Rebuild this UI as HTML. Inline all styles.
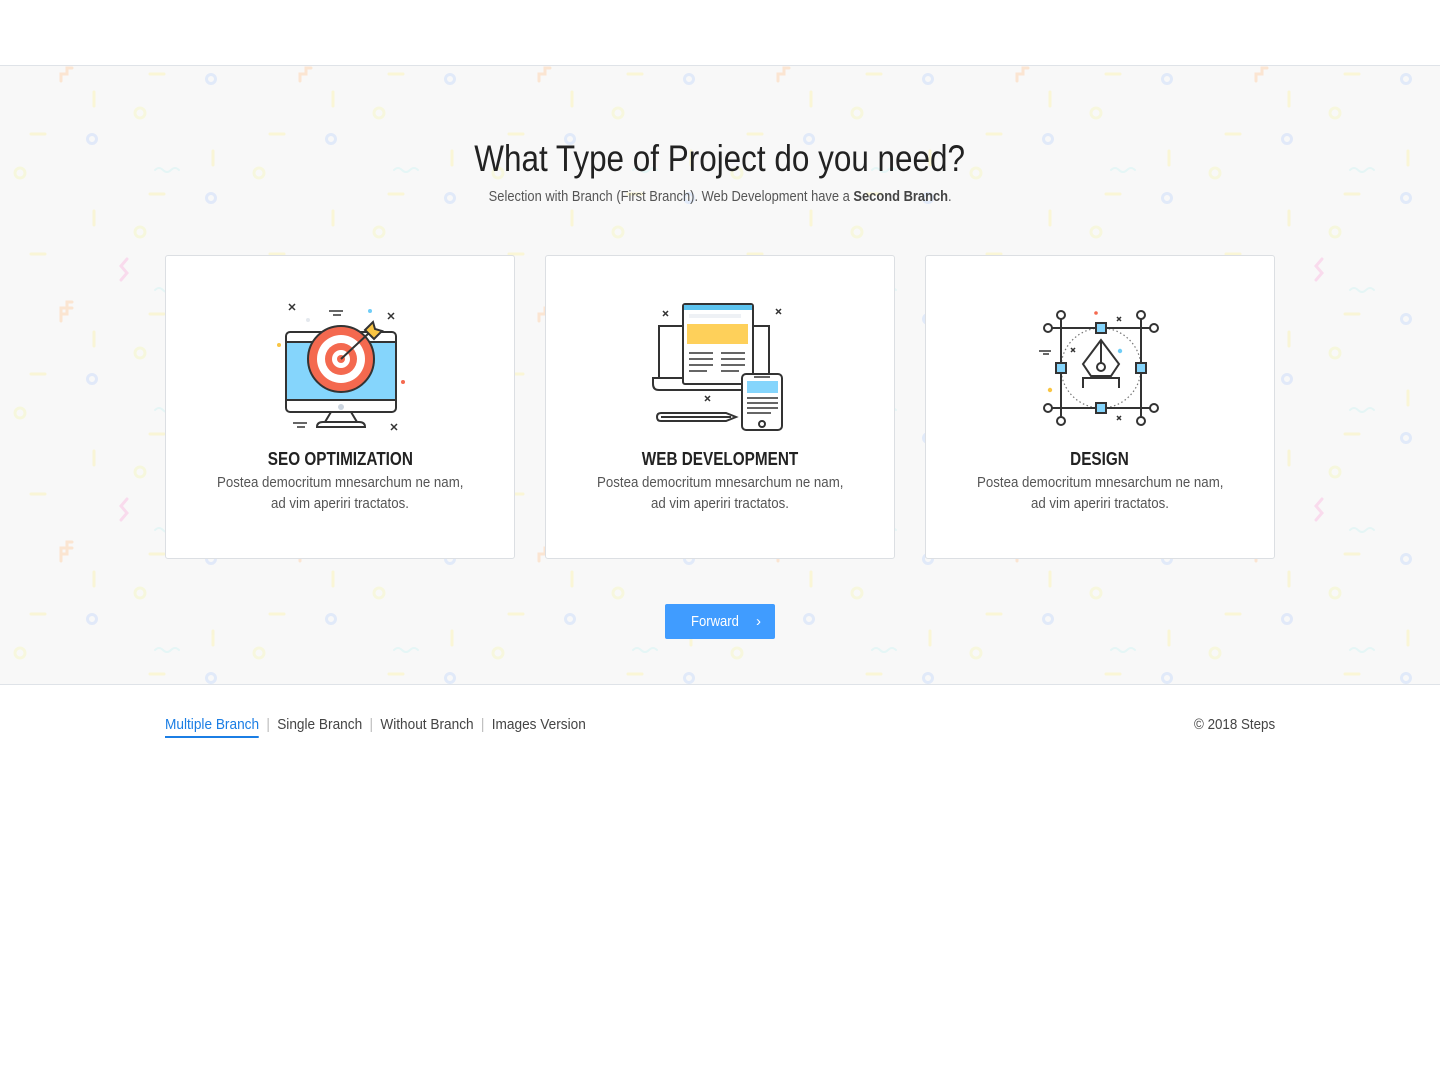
<!DOCTYPE html>
<html><head><meta charset="utf-8">
<style>
*{box-sizing:border-box;margin:0;padding:0}
body{width:1440px;height:1080px;background:#fff;font-family:"Liberation Sans",sans-serif;color:#333;overflow:hidden;position:relative}
.band{position:absolute;left:0;top:65px;width:1440px;height:620px;background:#f8f8f8;border-top:1px solid #dfe3e8;border-bottom:1px solid #dfe3e8;overflow:hidden}
.band svg.bg{position:absolute;left:0;top:0}
.c{position:absolute;left:0;width:1440px;text-align:center}
.c span{display:inline-block;transform-origin:center}
h1{font-weight:400;font-size:37px;color:#222}
h1 span{transform:scaleX(0.85)}
.sub{top:188px;font-size:15px;color:#555}
.sub span{transform:scaleX(0.86)}
.sub b{color:#444}
.card{position:absolute;top:255px;width:350px;height:304px;background:#fff;border:1px solid #dcdfe3;border-radius:3px;text-align:center}
.card svg{position:absolute;left:95px;top:40px}
.card h3{position:absolute;top:193px;width:100%;font-size:18px;font-weight:700;color:#222}
.card h3 span{display:inline-block;transform:scaleX(0.85)}
.card p{position:absolute;top:216px;width:100%;font-size:15px;line-height:21px;color:#555}
.card p span{display:inline-block;transform:scaleX(0.885)}
.btn{position:absolute;left:665px;top:604px;width:110px;height:35px;background:#409cff;border-radius:2px;color:#fff;font-size:15px;line-height:35px}
.btn b{font-weight:400;position:absolute;left:26px;top:0;display:inline-block;transform:scaleX(0.87);transform-origin:left}
.btn span{position:absolute;right:14px;top:0}
.foot{position:absolute;top:716px;left:165px;font-size:15px;color:#444;transform:scaleX(0.91);transform-origin:left;white-space:nowrap}
.foot a{color:#444;text-decoration:none}
.foot a.act{color:#1b7ee4;border-bottom:2px solid #1b7ee4;padding-bottom:3px}
.foot i{font-style:normal;color:#bbb;margin:0 8px}
.copy{position:absolute;top:716px;right:165px;font-size:15px;color:#444;transform:scaleX(0.89);transform-origin:right}
</style></head><body>
<div class="band">
<svg class="bg" width="1440" height="620">
<defs><pattern id="p" width="239" height="240" patternUnits="userSpaceOnUse" x="0" y="0">
<g fill="none" stroke-width="3" stroke-linecap="round">
<path d="M61 15 v-7 h6 v-6 h5" stroke="#fdd9b8"/>
<path d="M150 8 h14" stroke="#fbf4c0"/>
<path d="M31 68 h14" stroke="#fbf4c0"/>
<path d="M150 128 h14" stroke="#fbf4c0"/>
<circle cx="211" cy="13" r="4.5" stroke="#d2e0fa"/>
<circle cx="92" cy="73" r="4.5" stroke="#d2e0fa"/>
<circle cx="211" cy="132" r="4.5" stroke="#d2e0fa"/>
<path d="M94 26 v14" stroke="#fbf4c0"/>
<path d="M94 145 v14" stroke="#fbf4c0"/>
<path d="M213 85 v14" stroke="#fbf4c0"/>
<circle cx="140" cy="47" r="5" stroke="#f6f7cc"/>
<circle cx="20" cy="107" r="5" stroke="#f6f7cc"/>
<circle cx="140" cy="166" r="5" stroke="#f6f7cc"/>
<path d="M155 104 q4-4 8 0 t8 0 t8 0" stroke="#d9f4f4" stroke-width="2"/>
<path d="M31 188 h14" stroke="#fbf4c0"/>
<path d="M155 224 q4-4 8 0 t8 0 t8 0" stroke="#d9f4f4" stroke-width="2"/>
</g></pattern></defs>
<g opacity="0.6">
<rect width="1440" height="620" fill="url(#p)"/>
<g fill="none" stroke-width="3" stroke-linecap="round" stroke="#fac9e6">
<path d="M127 193 l-6 7 l6 7 l-6 7"/><path d="M127 433 l-6 7 l6 7 l-6 7"/>
<path d="M1322 193 l-6 7 l6 7 l-6 7"/><path d="M1322 433 l-6 7 l6 7 l-6 7"/>
</g>
<g fill="none" stroke-width="3" stroke-linecap="round" stroke="#fdd9b8">
<path d="M61 249 v-7 h6 v-6 h5"/><path d="M61 489 v-7 h6 v-6 h5"/>
</g>
</g>
</svg>
</div>
<div class="c" style="top:138px"><h1><span>What Type of Project do you need?</span></h1></div>
<div class="c sub"><span>Selection with Branch (First Branch). Web Development have a <b>Second Branch</b>.</span></div>

<div class="card" style="left:165px">
<svg width="160" height="150" viewBox="0 0 160 150" fill="none" stroke="#333" stroke-width="2">
<rect x="25" y="36" width="110" height="80" rx="4" fill="#fff"/>
<rect x="26" y="46" width="108" height="58" fill="#85d5fc" stroke="none"/>
<path d="M25 46h110M25 104h110"/>
<circle cx="80" cy="111" r="3" fill="#ccd5e0" stroke="none"/>
<path d="M70 116 l-6 10 h32 l-6-10"/><path d="M56 131 q0-5 6-5 h36 q6 0 6 5z" fill="#fff"/>
<circle cx="80" cy="63" r="33" fill="#f4694f"/>
<circle cx="80" cy="63" r="24" fill="#fff" stroke="none"/>
<circle cx="80" cy="63" r="16" fill="#f4694f" stroke="none"/>
<circle cx="80" cy="63" r="9" fill="#fff" stroke="none"/>
<circle cx="80" cy="63" r="4" fill="#f4694f" stroke="none"/>
<path d="M80 63 L108 37"/>
<path d="M104 34 l8-8 l2 7 l7 2 l-8 8z" fill="#f9c543"/>
<path d="M28 8l6 6M34 8l-6 6M127 17l6 6M133 17l-6 6M130 128l6 6M136 128l-6 6" stroke-width="1.5"/>
<path d="M68 15h14M72 19h8M32 127h14M36 131h8" stroke-width="1.5"/>
<circle cx="109" cy="15" r="2" fill="#6fcdf7" stroke="none"/><circle cx="18" cy="49" r="2" fill="#f9c543" stroke="none"/><circle cx="142" cy="86" r="2" fill="#f4694f" stroke="none"/><circle cx="47" cy="24" r="2" fill="#e4e8ee" stroke="none"/>
</svg>
<h3><span>SEO OPTIMIZATION</span></h3><p><span>Postea democritum mnesarchum ne nam,</span><br><span>ad vim aperiri tractatos.</span></p></div>

<div class="card" style="left:545px">
<svg width="160" height="150" viewBox="0 0 160 150" fill="none" stroke="#333" stroke-width="2">
<path d="M18 82 V30 h110 v52"/>
<path d="M12 82 h125 v6 q0 6-6 6 h-113 q-6 0-6-6z" fill="#fff"/>
<rect x="42" y="8" width="70" height="80" rx="2" fill="#fff"/>
<rect x="43" y="9" width="68" height="5" fill="#5cc3ef" stroke="none"/>
<rect x="48" y="18" width="52" height="4" fill="#eef1f5" stroke="none"/>
<rect x="46" y="28" width="61" height="20" fill="#fed05a" stroke="none"/>
<path d="M48 57h24M80 57h24M48 63h24M80 63h24M48 69h24M80 69h24M48 75h18M80 75h18" stroke-width="1.6"/>
<rect x="101" y="78" width="40" height="56" rx="4" fill="#fff"/>
<rect x="106" y="85" width="31" height="12" fill="#85d5fc" stroke="none"/>
<path d="M106 102h31M106 107h31M106 112h31M106 117h24M113 81h16" stroke-width="1.5"/>
<circle cx="121" cy="128" r="3"/>
<path d="M20 117 h65 l10 4 l-10 4 h-65 q-4 0-4-4 q0-4 4-4z M20 121 h70"/>
<path d="M22 15l5 5M27 15l-5 5M135 13l5 5M140 13l-5 5M64 100l5 5M69 100l-5 5" stroke-width="1.5"/>
</svg>
<h3><span>WEB DEVELOPMENT</span></h3><p><span>Postea democritum mnesarchum ne nam,</span><br><span>ad vim aperiri tractatos.</span></p></div>

<div class="card" style="left:925px">
<svg width="160" height="150" viewBox="0 0 160 150" fill="none" stroke="#333" stroke-width="2">
<circle cx="80" cy="72" r="40" stroke="#777" stroke-width="1.2" stroke-dasharray="1.5 2.5"/>
<path d="M40 32 h80 M40 112 h80 M40 32 v80 M120 32 v80"/>
<path d="M40 32 h-9 M40 32 v-9 M120 32 h9 M120 32 v-9 M40 112 h-9 M40 112 v9 M120 112 h9 M120 112 v9"/>
<circle cx="27" cy="32" r="4" fill="#fff"/><circle cx="40" cy="19" r="4" fill="#fff"/><circle cx="133" cy="32" r="4" fill="#fff"/><circle cx="120" cy="19" r="4" fill="#fff"/>
<circle cx="27" cy="112" r="4" fill="#fff"/><circle cx="40" cy="125" r="4" fill="#fff"/><circle cx="133" cy="112" r="4" fill="#fff"/><circle cx="120" cy="125" r="4" fill="#fff"/>
<rect x="75" y="27" width="10" height="10" fill="#85d5fc"/><rect x="75" y="107" width="10" height="10" fill="#85d5fc"/>
<rect x="35" y="67" width="10" height="10" fill="#85d5fc"/><rect x="115" y="67" width="10" height="10" fill="#85d5fc"/>
<path d="M80 44 L62 68 L70 80 H90 L98 68 Z M80 44 V67" fill="#fff"/><circle cx="80" cy="71" r="4" fill="#fff"/>
<path d="M62 92 V82 H98 V92"/>
<path d="M50 52l4 4M54 52l-4 4M96 21l4 4M100 21l-4 4M96 120l4 4M100 120l-4 4" stroke-width="1.5"/>
<path d="M18 55h12M22 58h6" stroke-width="1.5"/>
<circle cx="75" cy="17" r="1.8" fill="#f4694f" stroke="none"/><circle cx="99" cy="55" r="2.2" fill="#6fcdf7" stroke="none"/><circle cx="29" cy="94" r="2.2" fill="#f9c543" stroke="none"/>
</svg>
<h3><span>DESIGN</span></h3><p><span>Postea democritum mnesarchum ne nam,</span><br><span>ad vim aperiri tractatos.</span></p></div>

<div class="btn"><b>Forward</b><span>›</span></div>

<div class="foot"><a class="act">Multiple Branch</a><i>|</i><a>Single Branch</a><i>|</i><a>Without Branch</a><i>|</i><a>Images Version</a></div>
<div class="copy">© 2018 Steps</div>
</body></html>
